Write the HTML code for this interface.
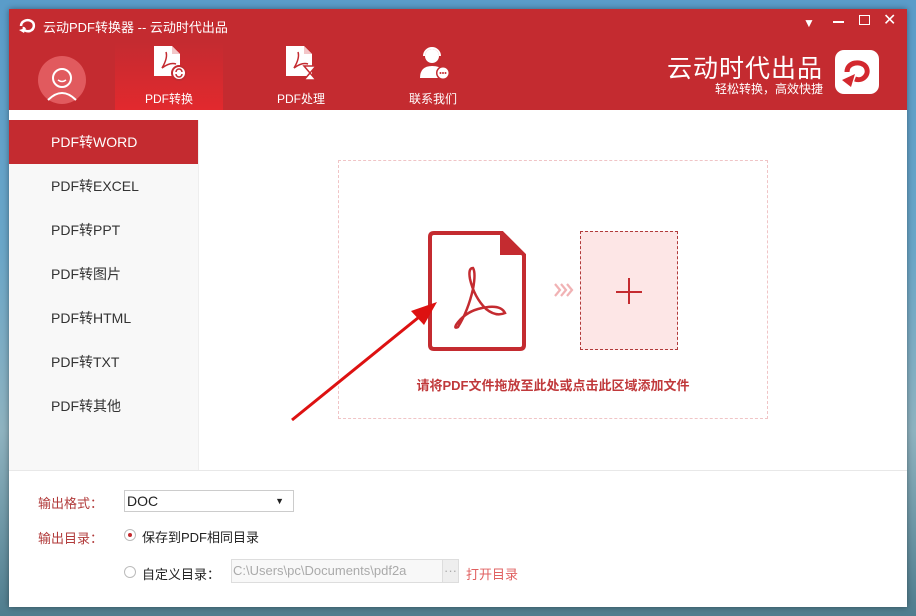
<!DOCTYPE html>
<html><head><meta charset="utf-8"><style>
*{margin:0;padding:0;box-sizing:border-box}
body{width:916px;height:616px;overflow:hidden;position:relative;font-family:"Liberation Sans","Noto Sans CJK SC",sans-serif;background:linear-gradient(180deg,#5a9cc9 0%,#6aa6c8 40%,#8fb3c0 70%,#4f7d8e 100%)}
.win{position:absolute;left:9px;top:9px;width:898px;height:598px;background:#fff;box-shadow:0 0 6px rgba(0,0,0,.4)}
.hdr{position:absolute;left:0;top:0;width:898px;height:101px;background:#c42b30}
.title{position:absolute;left:34px;top:8px;color:#fff;font-size:13px}
.tab{position:absolute;top:33px;width:108px;height:68px;color:#fff;font-size:12px;text-align:center}
.tab span{position:absolute;left:0;right:0;top:48px}
.abs{position:absolute}
.side{position:absolute;left:0;top:111px;width:190px;height:350px;background:#f8f8f8;border-right:1px solid #eee}
.side div{height:44px;line-height:44px;padding-left:42px;font-size:14px;color:#333}
.side .on{background:#c42b30;color:#fff}
.lbl{position:absolute;font-size:13px;color:#b13a3a}
</style></head><body>
<div class="win">
<div class="hdr">
 <svg class="abs" style="left:9px;top:9px" width="20" height="16" viewBox="0 0 20 16"><path d="M3 8 C3 3 9 1 13 3 C17 5 17 11 12 13 C8 14 5 12 6 9" stroke="#fff" stroke-width="2.5" fill="none"/><path d="M1 12 L8 10 L6 15 Z" fill="#fff"/></svg>
 <div class="title">云动PDF转换器 -- 云动时代出品</div>
 <div class="abs" style="left:29px;top:47px;width:48px;height:48px;border-radius:50%;background:#e15a5e"></div>
 <svg class="abs" style="left:29px;top:47px" width="48" height="48" viewBox="0 0 48 48"><circle cx="24" cy="22" r="9" stroke="#fff" stroke-width="2" fill="none"/><path d="M20 24 Q24 27 28 24" stroke="#fff" stroke-width="1.5" fill="none"/><path d="M10 44 Q24 30 38 44" stroke="#fff" stroke-width="2" fill="none"/></svg>
 <div class="tab" style="left:106px;background:linear-gradient(180deg,#c42b30,#e2292e)">
  <svg class="abs" style="left:37px;top:2px" width="36" height="38" viewBox="0 0 36 38"><path d="M2 2 H20 L28 10 V32 H2Z" fill="#fff"/><path d="M20 2 V10 H28" fill="#f3c6c8"/><path d="M14 8 Q16 14 10 24 Q18 18 24 20" stroke="#c42b30" stroke-width="1.5" fill="none"/><circle cx="27" cy="29" r="8" fill="#c42b30"/><circle cx="27" cy="29" r="6" fill="#fff"/><path d="M24 28 A3 3 0 0 1 30 28 M30 30 A3 3 0 0 1 24 30" stroke="#c42b30" stroke-width="1.5" fill="none"/></svg>
  <span>PDF转换</span></div>
 <div class="tab" style="left:238px">
  <svg class="abs" style="left:37px;top:2px" width="36" height="38" viewBox="0 0 36 38"><path d="M2 2 H20 L28 10 V32 H2Z" fill="#fff"/><path d="M20 2 V10 H28" fill="#f3c6c8"/><path d="M14 8 Q16 14 10 24 Q18 18 24 20" stroke="#c42b30" stroke-width="1.5" fill="none"/><path d="M20 22 H32 L26 29 L32 36 H20 L26 29Z" fill="#fff" stroke="#c42b30" stroke-width="1.5"/></svg>
  <span>PDF处理</span></div>
 <div class="tab" style="left:370px">
  <svg class="abs" style="left:37px;top:2px" width="36" height="38" viewBox="0 0 36 38"><circle cx="16" cy="12" r="7" fill="#fff"/><path d="M8 12 A8 8 0 0 1 24 12" stroke="#fff" stroke-width="2" fill="none"/><path d="M4 34 Q4 22 16 22 Q24 22 26 26 V34Z" fill="#fff"/><circle cx="27" cy="29" r="7" fill="#c42b30"/><circle cx="27" cy="29" r="5.5" fill="#fff"/><circle cx="24.5" cy="29" r="1" fill="#c42b30"/><circle cx="27" cy="29" r="1" fill="#c42b30"/><circle cx="29.5" cy="29" r="1" fill="#c42b30"/></svg>
  <span>联系我们</span></div>
 <div class="abs" style="right:84px;top:40px;color:#fff;font-size:25px;letter-spacing:1px">云动时代出品</div>
 <div class="abs" style="right:84px;top:71px;color:#fff;font-size:12px">轻松转换，高效快捷</div>
 <div class="abs" style="left:826px;top:41px;width:44px;height:44px;border-radius:9px;background:#fff"></div>
 <svg class="abs" style="left:826px;top:41px" width="44" height="44" viewBox="0 0 44 44"><path d="M12 22 C12 12 26 10 31 17 C35 24 28 32 20 29" stroke="#d3282e" stroke-width="5" fill="none"/><path d="M7 30 L20 24 L16 37Z" fill="#d3282e"/></svg>
 <div class="abs" style="left:794px;top:7px;color:#fff;font-size:12px">▼</div>
 <div class="abs" style="left:824px;top:12px;width:11px;height:1.5px;background:#fff"></div>
 <div class="abs" style="left:850px;top:6px;width:11px;height:10px;border:1.5px solid #fff"></div>
 <div class="abs" style="left:874px;top:1px;color:#fff;font-size:16px">✕</div>
</div>
<div class="side">
 <div class="on">PDF转WORD</div><div>PDF转EXCEL</div><div>PDF转PPT</div><div>PDF转图片</div><div>PDF转HTML</div><div>PDF转TXT</div><div>PDF转其他</div>
</div>
<div class="abs" style="left:0;top:461px;width:898px;height:1px;background:#e8e8e8"></div>
<div class="abs" style="left:329px;top:151px;width:430px;height:259px;border:1px dashed #f0c4c6"></div>
<svg class="abs" style="left:419px;top:222px" width="98" height="120" viewBox="0 0 98 120"><path d="M6 2 H74 L96 24 V114 Q96 118 92 118 H6 Q2 118 2 114 V6 Q2 2 6 2Z" fill="#fff" stroke="#c42b30" stroke-width="4"/><path d="M72 2 V24 H96Z" fill="#c42b30"/><path d="M45 37 Q40 37 42 48 Q46 66 58 78 Q68 86 77 82 Q72 72 50 78 Q36 82 28 94 Q26 98 30 96 Q40 80 45 58 Q48 42 45 37Z" stroke="#c42b30" stroke-width="2.5" fill="none"/></svg>
<svg class="abs" style="left:545px;top:274px" width="20" height="14" viewBox="0 0 20 14"><path d="M1 1 L6 7 L1 13 M7 1 L12 7 L7 13 M13 1 L18 7 L13 13" stroke="#f1b2b4" stroke-width="2.2" fill="none"/></svg>
<div class="abs" style="left:571px;top:222px;width:98px;height:119px;border:1px dashed #b13a3a;background:#fde6e6"></div>
<div class="abs" style="left:607px;top:282px;width:26px;height:2px;background:#c42b30"></div>
<div class="abs" style="left:619px;top:269px;width:2px;height:26px;background:#c42b30"></div>
<div class="abs" style="left:329px;top:366px;width:430px;text-align:center;color:#c0393b;font-size:13px;font-weight:bold">请将PDF文件拖放至此处或点击此区域添加文件</div>
<svg class="abs" style="left:270px;top:280px" width="170" height="150" viewBox="0 0 170 150"><line x1="13" y1="131" x2="145" y2="24" stroke="#d11" stroke-width="3"/><path d="M158 13 L132 22 L145 36Z" fill="#d11"/></svg>
<div class="lbl" style="left:29px;top:484px">输出格式：</div>
<div class="abs" style="left:115px;top:481px;width:170px;height:22px;border:1px solid #ccc;font-size:14px;line-height:20px;padding-left:2px;color:#222">DOC<span style="position:absolute;right:9px;font-size:9px">▼</span></div>
<div class="lbl" style="left:29px;top:519px">输出目录：</div>
<div class="abs" style="left:115px;top:520px;width:12px;height:12px;border-radius:50%;border:1px solid #bbb"><div style="margin:3px;width:4px;height:4px;border-radius:50%;background:#c42b30"></div></div>
<div class="abs" style="left:133px;top:518px;font-size:13px;color:#222">保存到PDF相同目录</div>
<div class="abs" style="left:115px;top:557px;width:12px;height:12px;border-radius:50%;border:1px solid #bbb"></div>
<div class="abs" style="left:133px;top:555px;font-size:13px;color:#222">自定义目录：</div>
<div class="abs" style="left:222px;top:550px;width:228px;height:24px;border:1px solid #ddd;background:#f8f8f8;font-size:13px;color:#aaa;line-height:22px;padding-left:1px;overflow:hidden;white-space:nowrap">C:\Users\pc\Documents\pdf2a<span style="position:absolute;right:0;top:0;width:16px;height:22px;background:#eee;border-left:1px solid #ddd;text-align:center">···</span></div>
<div class="abs" style="left:457px;top:555px;font-size:13px;color:#e06060">打开目录</div>
</div>
</body></html>
